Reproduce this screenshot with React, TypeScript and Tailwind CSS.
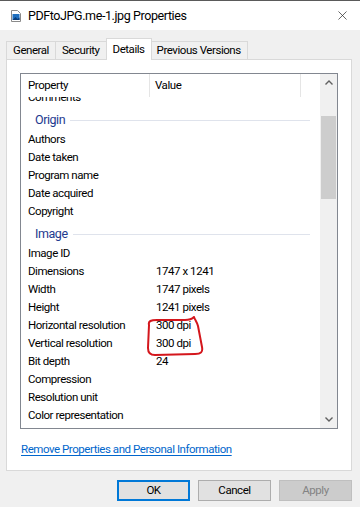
import { X } from 'lucide-react';

type Row = { kind: 'row'; name: string; value?: string } | { kind: 'group'; name: string };

const rows: Row[] = [
  { kind: 'row', name: 'Comments' },
  { kind: 'group', name: 'Origin' },
  { kind: 'row', name: 'Authors' },
  { kind: 'row', name: 'Date taken' },
  { kind: 'row', name: 'Program name' },
  { kind: 'row', name: 'Date acquired' },
  { kind: 'row', name: 'Copyright' },
  { kind: 'group', name: 'Image' },
  { kind: 'row', name: 'Image ID' },
  { kind: 'row', name: 'Dimensions', value: '1747 x 1241' },
  { kind: 'row', name: 'Width', value: '1747 pixels' },
  { kind: 'row', name: 'Height', value: '1241 pixels' },
  { kind: 'row', name: 'Horizontal resolution', value: '300 dpi' },
  { kind: 'row', name: 'Vertical resolution', value: '300 dpi' },
  { kind: 'row', name: 'Bit depth', value: '24' },
  { kind: 'row', name: 'Compression' },
  { kind: 'row', name: 'Resolution unit' },
  { kind: 'row', name: 'Color representation' },
];

const tabs = ['General', 'Security', 'Details', 'Previous Versions'];

function FileIcon() {
  return (
    <svg width="10" height="12" viewBox="0 0 10 12" className="shrink-0">
      <path d="M0.5 0.5h6l3 3v8h-9z" fill="#ffffff" stroke="#8a8a8a" />
      <rect x="1.5" y="4" width="7" height="6" fill="#1f6fbf" />
      <path d="M1.5 10l3-3 2 2 2-1.5V10z" fill="#0b3d7a" />
    </svg>
  );
}

export default function App() {
  return (
    <div className="w-[360px] h-[507px] bg-[#f0f0f0] overflow-hidden flex flex-col text-[11.5px] tracking-[-0.45px] text-black font-[Roboto,'Liberation_Sans',sans-serif] border-t border-[#5a5a5a]">

      {/* Title bar */}
      <div className="h-[29px] bg-white flex items-center pl-[11px] pr-[10px] shrink-0">
        <FileIcon />
        <span className="ml-[7px] text-[12.5px] tracking-[-0.4px] leading-none mt-[1px]">PDFtoJPG.me-1.jpg Properties</span>
        <X className="ml-auto text-[#222]" size={15} strokeWidth={1.1} />
      </div>

      {/* Tabs */}
      <div className="flex items-end pl-[6px] h-[29px] shrink-0">
        {tabs.map((t) =>
          t === 'Details' ? (
            <div key={t} className="h-[22px] px-[6px] bg-white border border-b-0 border-[#d9d9d9] -mb-px relative z-10 flex items-start pt-[2px] -mx-px">
              {t}
            </div>
          ) : (
            <div key={t} className="h-[18px] px-[6px] border border-b-0 border-[#d9d9d9] flex items-center bg-[#f0f0f0] -ml-px first:ml-0">
              {t}
            </div>
          )
        )}
      </div>

      {/* Tab panel */}
      <div className="mx-[6px] w-[346px] h-[412px] bg-white border border-[#d9d9d9] shrink-0 pt-[13px] pl-[13px] flex flex-col">

        {/* List view */}
        <div className="w-[318px] h-[356px] border border-[#828790] flex relative">
          <div className="flex-1 flex flex-col overflow-hidden">
            <div className="h-[23px] flex shrink-0 bg-white relative z-10">
              <div className="w-[129px] border-r border-[#e5e5e5] pl-[7px] flex items-center">Property</div>
              <div className="w-[151px] border-r border-[#e5e5e5] pl-[5px] flex items-center">Value</div>
            </div>
            <div className="-mt-[8px]">
              {rows.map((r, i) =>
                r.kind === 'group' ? (
                  <div key={i} className="h-[24px] flex items-center pl-[14px] pr-[10px] pt-[2px]">
                    <span className="text-[#1e3a8f] text-[12.5px]">{r.name}</span>
                    <div className="flex-1 h-px bg-[#dfe3ec] ml-[5px]" />
                  </div>
                ) : (
                  <div key={i} className="h-[18px] flex items-center">
                    <div className="w-[135px] pl-[7px] whitespace-nowrap">{r.name}</div>
                    <div className="whitespace-nowrap">{r.value ?? ''}</div>
                  </div>
                )
              )}
            </div>
          </div>

          {/* Scrollbar */}
          <div className="w-[17px] bg-[#f0f0f0] flex flex-col items-center">
            <div className="h-[17px] w-full flex items-center justify-center">
              <svg width="8" height="5" viewBox="0 0 8 5"><path d="M0.5 4.5L4 1l3.5 3.5" fill="none" stroke="#606060" strokeWidth="1.4" /></svg>
            </div>
            <div className="mt-[25px] h-[83px] w-[15px] bg-[#cdcdcd]" />
            <div className="mt-auto h-[17px] w-full flex items-center justify-center">
              <svg width="8" height="5" viewBox="0 0 8 5"><path d="M0.5 0.5L4 4l3.5-3.5" fill="none" stroke="#606060" strokeWidth="1.4" /></svg>
            </div>
          </div>

          {/* Red annotation */}
          <svg className="absolute left-[124px] top-[242px] pointer-events-none" width="64" height="42" viewBox="0 0 64 42">
            <path
              d="M4 9 C3 5 6 4 12 4 L40 4 C46 4 48 2 49 1 C50 4 52 6 53 10 L57 31 C58 36 56 38 50 38 L10 39 C5 39 3 37 3 32 L4 9"
              fill="none"
              stroke="#d4161c"
              strokeWidth="2"
              strokeLinecap="round"
              strokeLinejoin="round"
            />
          </svg>
        </div>

        <div className="mt-[12px] text-[#0066cc] underline underline-offset-2 decoration-1 pl-px">
          Remove Properties and Personal Information
        </div>
      </div>

      {/* Buttons */}
      <div className="flex justify-end gap-[8px] pr-[8px] mt-[9px]">
        <button className="w-[73px] h-[21px] bg-[#e1e1e1] border-2 border-[#0078d7]">OK</button>
        <button className="w-[73px] h-[21px] bg-[#e1e1e1] border border-[#adadad]">Cancel</button>
        <button className="w-[73px] h-[21px] bg-[#cccccc] border border-[#bfbfbf] text-[#838383]">Apply</button>
      </div>
    </div>
  );
}
